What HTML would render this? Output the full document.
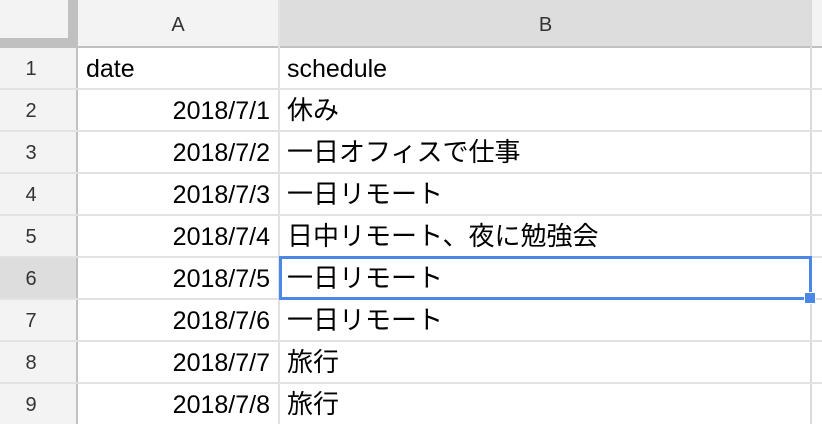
<!DOCTYPE html><html><head><meta charset="utf-8"><style>
body{margin:0;width:822px;height:424px;overflow:hidden;background:#fff;font-family:"Liberation Sans","Noto Sans CJK JP",sans-serif;position:relative}
div{position:absolute;box-sizing:border-box}
.hl{left:0;width:822px;height:2px;background:#e2e2e2}
.rn{left:0;width:62px;text-align:center;font-size:20px;color:#333;height:42px;line-height:44px}
.a{left:78px;width:192px;text-align:right;font-size:25px;color:#000;height:42px;line-height:44px}
.b{left:287px;font-size:25px;color:#000;height:42px;line-height:44px;white-space:nowrap}
.j{font-size:26px;line-height:42px}
</style></head><body>
<div style="left:0;top:0;width:77px;height:424px;background:#f3f3f3"></div>
<div style="left:0;top:257px;width:77px;height:41px;background:#dddddd"></div>
<div style="left:0;top:0;width:822px;height:47px;background:#f3f3f3"></div>
<div style="left:280px;top:0;width:531px;height:47px;background:#dddddd"></div>
<div style="left:0;top:0;background:#f3f3f3;border-right:8px solid #c0c0c0;border-bottom:8px solid #c0c0c0;width:76px;height:46px"></div>
<div style="left:0;top:46px;width:822px;height:2px;background:#c0c0c0"></div>
<div style="left:76px;top:0;width:2px;height:424px;background:#c0c0c0"></div>
<div style="left:278px;top:0;width:2px;height:424px;background:#e2e2e2"></div>
<div style="left:810px;top:0;width:2px;height:424px;background:#dadada"></div>
<div style="left:77px;top:0;width:202px;height:46px;line-height:50px;text-align:center;font-size:20px;color:#333">A</div>
<div style="left:280px;top:0;width:531px;height:46px;line-height:50px;text-align:center;font-size:20px;color:#333">B</div>
<div class="hl" style="top:88px"></div><div class="hl" style="top:130px"></div><div class="hl" style="top:172px"></div><div class="hl" style="top:214px"></div><div class="hl" style="top:256px"></div><div class="hl" style="top:298px"></div><div class="hl" style="top:340px"></div><div class="hl" style="top:382px"></div>
<div class="rn" style="top:47px">1</div><div class="rn" style="top:89px">2</div><div class="rn" style="top:131px">3</div><div class="rn" style="top:173px">4</div><div class="rn" style="top:215px">5</div><div class="rn" style="top:257px">6</div><div class="rn" style="top:299px">7</div><div class="rn" style="top:341px">8</div><div class="rn" style="top:383px">9</div>
<div class="b" style="top:47px;left:86px">date</div><div class="b" style="top:47px">schedule</div>
<div class="a" style="top:89px">2018/7/1</div><div class="b j" style="top:89px">休み</div>
<div class="a" style="top:131px">2018/7/2</div><div class="b j" style="top:131px">一日オフィスで仕事</div>
<div class="a" style="top:173px">2018/7/3</div><div class="b j" style="top:173px">一日リモート</div>
<div class="a" style="top:215px">2018/7/4</div><div class="b j" style="top:215px">日中リモート、夜に勉強会</div>
<div class="a" style="top:257px">2018/7/5</div><div class="b j" style="top:257px">一日リモート</div>
<div class="a" style="top:299px">2018/7/6</div><div class="b j" style="top:299px">一日リモート</div>
<div class="a" style="top:341px">2018/7/7</div><div class="b j" style="top:341px">旅行</div>
<div class="a" style="top:383px">2018/7/8</div><div class="b j" style="top:383px">旅行</div>
<div style="left:279px;top:256px;width:533px;height:44px;border:3px solid #4a87e8"></div>
<div style="left:804px;top:292px;width:12px;height:12px;background:#4a87e8;border:1px solid #fff"></div>
</body></html>
